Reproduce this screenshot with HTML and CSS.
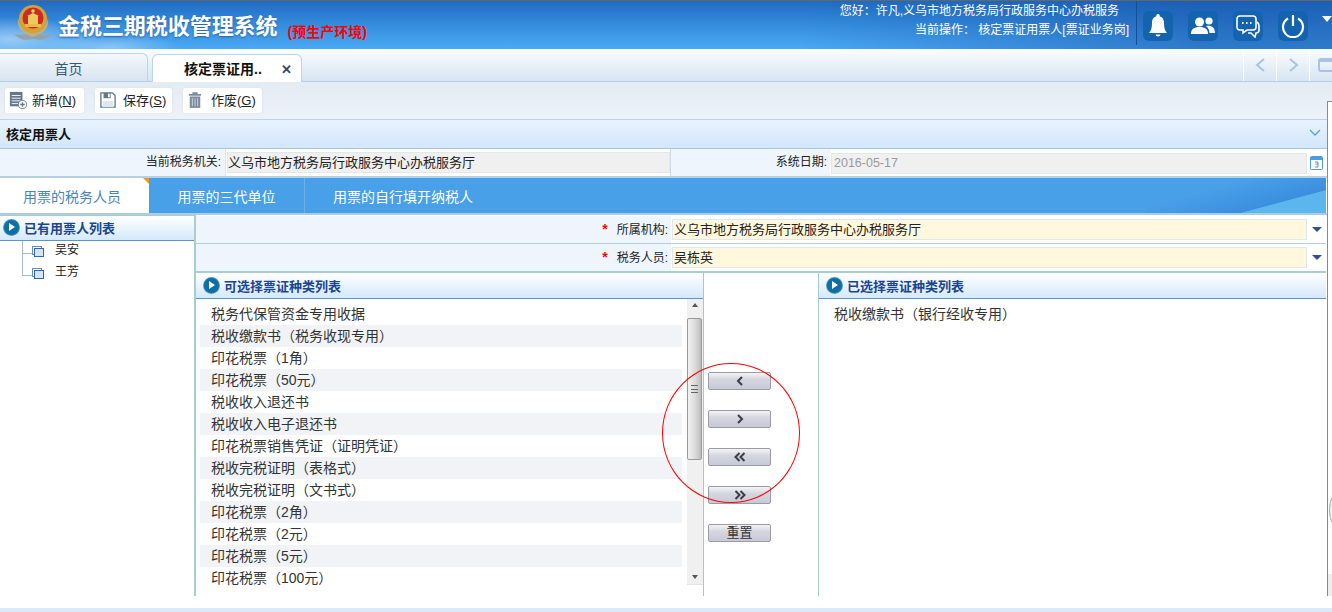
FILE: index.html
```html
<!DOCTYPE html>
<html lang="zh-CN">
<head>
    <meta charset="UTF-8">
    <title>金税三期税收管理系统</title>
    <link rel="stylesheet" href="styles.css">
</head>
<body>
    <header class="banner">
        <div class="brand">
            <svg class="emblem" width="40" height="38" viewBox="0 0 40 38">
                <path d="M1 29 Q8 37 20 34 Q32 37 39 29 Q30 31 20 28 Q10 31 1 29Z" fill="#93a3ac"/>
                <path d="M5 13 Q3 27 20 32 Q37 27 35 13 Q33 26 20 28 Q7 26 5 13Z" fill="#b9b287"/>
                <circle cx="20" cy="14" r="14" fill="#d9a032"/>
                <circle cx="20" cy="13" r="10.500" fill="#cc2a24"/>
                <path d="M12 19h16v3H12z" fill="#e6bd48"/>
                <path d="M15 11h10v8H15z" fill="#eccb5c"/>
                <path d="M14 11h12l-6-3z" fill="#f0d264"/>
                <circle cx="20" cy="6" r="1.800" fill="#f4d75e"/>
            </svg>
            <span class="sys-name">金税三期税收管理系统</span>
            <span class="env-tag">(预生产环境)</span>
        </div>
        <div class="user-info">
            <div class="hello">您好：许凡,义乌市地方税务局行政服务中心办税服务</div>
            <div>当前操作： 核定票证用票人[票证业务岗]</div>
        </div>
        <div class="head-icons">
            <span class="head-btn">
                <svg width="20" height="24" viewBox="0 0 20 24"><path d="M10 0a1.600 1.600 0 0 1 1.600 2.200C15 3 16 6 16 9c0 5 1 8 3 10H1c2-2 3-5 3-10 0-3 1-6 4.400-6.800A1.600 1.600 0 0 1 10 0zM7.500 20.500h5a2.500 2 0 0 1-5 0z" fill="#fff"/></svg>
            </span>
            <span class="head-btn">
                <svg width="24" height="18" viewBox="0 0 24 18"><circle cx="8.500" cy="5" r="4.500" fill="#fff"/><path d="M0 17c0-5 3-7 8.500-7s8.500 2 8.500 7z" fill="#fff"/><circle cx="18" cy="4" r="3.600" fill="#fff"/><path d="M15 9c5-1 9 1 9 7h-5.500c0-3-1.500-5.500-3.500-7z" fill="#fff"/></svg>
            </span>
            <span class="head-btn">
                <svg width="24" height="24" viewBox="0 0 24 24" fill="none" stroke="#fff" stroke-width="1.600"><path d="M4 2h13a3 3 0 0 1 3 3v8a3 3 0 0 1-3 3h-6l-4 3v-3H4a3 3 0 0 1-3-3V5a3 3 0 0 1 3-3z"/><path d="M21 8c1.500 1 2 2 2 4v4c0 2-1 3-3 3l-1 4-4-4h-3"/><path d="M6 9h1.500M10 9h1.500M14 9h1.500" stroke-width="2"/></svg>
            </span>
            <span class="head-btn">
                <svg width="24" height="24" viewBox="0 0 24 24" fill="none" stroke="#fff" stroke-width="2.200"><path d="M7 4.500a10 10 0 1 0 10 0"/><path d="M12 1v11"/></svg>
            </span>
        </div>
        <span class="head-more"></span>
    </header>

    <nav class="tabbar">
        <div class="page-tab">首页</div>
        <div class="page-tab active">核定票证用..<span class="tab-close">✕</span></div>
        <div class="tab-tools">
            <span class="tool-cell"><svg width="11" height="16" viewBox="0 0 11 16"><path d="M9 2 2 8l7 6" fill="none" stroke="#a9c3e0" stroke-width="2"/></svg></span>
            <span class="tool-cell"><svg width="11" height="16" viewBox="0 0 11 16"><path d="m2 2 7 6-7 6" fill="none" stroke="#a9c3e0" stroke-width="2"/></svg></span>
            <span class="tool-cell last"><span class="window-icon"></span></span>
        </div>
    </nav>

    <div class="toolbar">
        <button class="tool-btn btn-new">
            <svg width="18" height="18" viewBox="0 0 20 20"><path d="M1 1h14v16H1z" fill="#62798c"/><path d="M3 5h10M3 8h10M3 11h10M3 14h7" stroke="#fff" stroke-width="1"/><circle cx="15" cy="15" r="4.500" fill="#fff" stroke="#62798c"/><path d="M12.500 15h5M15 12.500v5" stroke="#62798c" stroke-width="1.500"/></svg>
            <span>新增(<u>N</u>)</span>
        </button>
        <button class="tool-btn btn-save">
            <svg width="16" height="16" viewBox="0 0 18 18"><path d="M1 1h13l3 3v13H1z" fill="#fff" stroke="#62798c" stroke-width="1.500"/><path d="M4 1h8v6H4z" fill="#62798c"/><path d="M9 2h2v4H9z" fill="#fff"/><path d="M3 10h12v7H3z" fill="#dfe7ee"/></svg>
            <span>保存(<u>S</u>)</span>
        </button>
        <button class="tool-btn btn-void">
            <svg width="14" height="18" viewBox="0 0 16 20"><path d="M1 3h14v2H1zM5 1h6v2H5z" fill="#7b8d9c"/><path d="M2 6h12v13H2z" fill="#7b8d9c"/><path d="M5 8v9M8 8v9M11 8v9" stroke="#d5dde4" stroke-width="1"/></svg>
            <span>作废(<u>G</u>)</span>
        </button>
    </div>

    <section class="section-head">
        <b>核定用票人</b>
        <svg width="12" height="8" viewBox="0 0 12 8"><path d="m1 1 5 5 5-5" fill="none" stroke="#5a9fdc" stroke-width="1.300"/></svg>
    </section>

    <div class="org-row">
        <label class="org-label">当前税务机关:</label>
        <div class="org-value"><span class="field grey">义乌市地方税务局行政服务中心办税服务厅</span></div>
        <label class="date-label">系统日期:</label>
        <div class="date-value">
            <span class="field grey date-text">2016-05-17</span>
            <svg class="cal" width="13" height="15" viewBox="0 0 13 15"><rect x=".5" y="1.500" width="12" height="13" rx="1" fill="#fff" stroke="#4a9be0"/><path d="M.5 2h12v3H.5z" fill="#4a9be0"/><path d="M5 7h3v2H5.500M8 9v3H5" fill="none" stroke="#5c8fc0"/></svg>
        </div>
    </div>

    <div class="blue-tabs">
        <div class="blue-tab current">用票的税务人员</div>
        <div class="blue-tab second">用票的三代单位</div>
        <div class="blue-tab last">用票的自行填开纳税人</div>
        <div class="blue-fill"></div>
    </div>

    <main class="main">
        <aside class="side">
            <div class="panel-head"><span class="dot"></span>已有用票人列表</div>
            <ul class="tree">
                <li><span class="node"></span>吴安</li>
                <li><span class="node"></span>王芳</li>
            </ul>
        </aside>
        <div class="content">
            <div class="pick-row">
                <div class="pick-label"><em>*</em>所属机构:</div>
                <div class="pick-value"><span class="field yellow">义乌市地方税务局行政服务中心办税服务厅</span><span class="caret"></span></div>
            </div>
            <div class="pick-row">
                <div class="pick-label"><em>*</em>税务人员:</div>
                <div class="pick-value"><span class="field yellow">吴栋英</span><span class="caret"></span></div>
            </div>
            <div class="transfer">
                <div class="list-left">
                    <div class="panel-head"><span class="dot"></span>可选择票证种类列表</div>
                    <div class="list-scroll">
                        <ul class="ticket-list">
                            <li>税务代保管资金专用收据</li>
                            <li>税收缴款书（税务收现专用）</li>
                            <li>印花税票（1角）</li>
                            <li>印花税票（50元）</li>
                            <li>税收收入退还书</li>
                            <li>税收收入电子退还书</li>
                            <li>印花税票销售凭证（证明凭证）</li>
                            <li>税收完税证明（表格式）</li>
                            <li>税收完税证明（文书式）</li>
                            <li>印花税票（2角）</li>
                            <li>印花税票（2元）</li>
                            <li>印花税票（5元）</li>
                            <li>印花税票（100元）</li>
                        </ul>
                        <div class="scrollbar">
                            <span class="arrow up"></span>
                            <span class="thumb"><i></i></span>
                            <span class="arrow down"></span>
                        </div>
                    </div>
                </div>
                <div class="move-col">
                    <button class="move-btn"><svg width="10" height="10" viewBox="0 0 10 10"><path d="M7 1 3 5l4 4" class="chev"/></svg></button>
                    <button class="move-btn"><svg width="10" height="10" viewBox="0 0 10 10"><path d="m3 1 4 4-4 4" class="chev"/></svg></button>
                    <button class="move-btn"><svg width="12" height="10" viewBox="0 0 12 10"><path d="M5.500 1 1.500 5l4 4M10.500 1l-4 4 4 4" class="chev"/></svg></button>
                    <button class="move-btn"><svg width="12" height="10" viewBox="0 0 12 10"><path d="m1.500 1 4 4-4 4M6.500 1l4 4-4 4" class="chev"/></svg></button>
                    <button class="move-btn">重置</button>
                    <span class="red-circle"></span>
                </div>
                <div class="list-right">
                    <div class="panel-head"><span class="dot"></span>已选择票证种类列表</div>
                    <ul class="ticket-list plain">
                        <li>税收缴款书（银行经收专用）</li>
                    </ul>
                </div>
            </div>
        </div>
    </main>
    <div class="page-foot"></div>

    <div class="page-scroll"><span class="grip"></span></div>
</body>
</html>
```

FILE: styles.css
```css
* { box-sizing: border-box; }
html, body { margin: 0; height: 612px; overflow: hidden; }
body { font-family: "Liberation Sans", "Noto Sans CJK SC", sans-serif; font-size: 12px; color: #222; background: #fff; position: relative; width: 1332px; }
ul { list-style: none; margin: 0; padding: 0; }
button { font: inherit; }

/* banner */
.banner { height: 49px; display: flex; border-top: 1px solid #666; background: linear-gradient(90deg, rgba(70,165,235,0) 0, rgba(70,165,235,0) 60%, rgba(24,84,170,.55) 90%), linear-gradient(180deg, #1f6cc2 0, #3a93e2 60%, #4aa9f4 100%); }
.brand { display: flex; align-items: center; width: 820px; padding-left: 13px; background: radial-gradient(ellipse 90px 22px at 10px 38px, rgba(255,255,255,.45), transparent), radial-gradient(ellipse 70px 14px at 110px 46px, rgba(255,255,255,.35), transparent); }
.emblem { margin-right: 5px; margin-top: -3px; flex: none; }
.sys-name { font-size: 22px; font-weight: bold; color: #fff; margin-top: -2px; text-shadow: 0 1px 2px #27609f; letter-spacing: -.05px; }
.env-tag { font-size: 14px; font-weight: bold; color: #f00; margin: 12px 0 0 10px; }
.user-info { width: 317px; height: 44px; padding-right: 7px; text-align: right; color: #fff; line-height: 18px; border-right: 1px solid #134f92; white-space: nowrap; font-size: 12px; }
.user-info div { padding-top: 1px; }
.user-info .hello { padding-right: 10px; }
.head-icons { display: flex; gap: 15px; margin-left: 6px; padding-top: 10px; }
.head-btn { width: 30px; height: 30px; border-radius: 6px; background: #1463ae; display: flex; align-items: center; justify-content: center; }
.head-more { margin: 15px 0 0 14px; border: 5px solid transparent; border-top: 6px solid #fff; height: 0; width: 0; }

/* page tabs */
.tabbar { height: 33px; display: flex; align-items: flex-end; background: linear-gradient(180deg, #fbfdff, #d6e4f2); border-bottom: 1px solid #b2cfec; position: relative; }
.page-tab { width: 148px; height: 28px; border: 1px solid #bcd3ea; border-bottom: 0; border-left: 0; border-radius: 0 6px 0 0; background: linear-gradient(180deg, #f3f8fc, #d8e4f0); color: #36587e; font-size: 14px; line-height: 31px; text-align: center; padding-right: 10px; }
.page-tab.active { width: 150px; margin-left: 4px; border-left: 1px solid #bcd3ea; border-radius: 6px 6px 0 0; background: #fff; color: #111; font-weight: bold; font-size: 14px; position: relative; top: 1px; padding-right: 8px; line-height: 29px; }
.tab-close { position: absolute; right: 9px; top: 0; font-size: 13px; color: #33496b; }
.tab-tools { margin-left: auto; display: flex; height: 32px; }
.tool-cell { width: 33px; border-left: 1px solid #fff; display: flex; align-items: center; justify-content: center; }
.tool-cell.last { width: 23px; justify-content: flex-start; padding-left: 8px; overflow: hidden; }
.window-icon { flex: none; width: 20px; height: 14px; border: 2px solid #a9c3e0; border-top-width: 4px; border-radius: 3px; }

/* toolbar */
.toolbar { height: 38px; padding: 6px 0 0 5px; display: flex; gap: 11px; background: linear-gradient(180deg, #e3ebf3, #edf2f8); border-bottom: 1px solid #bcd3ea; }
.tool-btn { height: 25px; padding: 0 0 2px 4px; display: flex; align-items: center; gap: 5px; border: 0; border-radius: 2px; background: #fff; box-shadow: 0 0 2px #d2dbe4; color: #222; font-size: 13px; white-space: nowrap; }
.btn-new { width: 79px; }
.btn-save { width: 77px; padding-left: 5px; gap: 7px; }
.btn-void { width: 79px; padding-left: 5px; gap: 9px; }

/* section */
.section-head { height: 29px; padding: 0 6px 0 6px; display: flex; align-items: center; justify-content: space-between; background: linear-gradient(180deg, #e8f3fe, #d3e6fb); border-bottom: 1px solid #a9c6df; border-right: 5px solid #fff; font-size: 13px; color: #111; }
.section-head b { margin-top: -2px; }
.section-head svg { margin-top: -3px; }
.org-row { height: 29px; display: flex; background: #eef5fc; border-bottom: 2px solid #b4d0e2; border-right: 6px solid #fff; }
.org-label { width: 225px; text-align: right; padding-right: 4px; line-height: 27px; }
.org-value { width: 445px; padding: 3px 0 2px 1px; border-left: 1px solid #dbe6ee; background: #fff; }
.org-value .field { padding-left: 0; }
.date-label { width: 160px; text-align: right; padding-right: 3px; line-height: 27px; border-left: 1px solid #cfdce8; }
.date-value { flex: 1; display: flex; padding: 3px 3px 2px 1px; background: #fff; align-items: center; }
.field { display: block; height: 21px; line-height: 19px; border: 1px solid #dfe8ef; padding-left: 1px; font-size: 13px; white-space: nowrap; flex: 1; }
.field.grey { background: #f0f0f0; }
.field.yellow { background: #fff8dc; }
.date-text { color: #9a9a9a; font-size: 12.500px; padding-left: 2px; }
.cal { margin: -2px 0 0 3px; flex: none; }

/* blue tabs */
.blue-tabs { height: 37px; display: flex; background: #48a0e8; border-bottom: 2px solid #aecbe4; color: #fff; font-size: 14px; border-right: 6px solid #fff; }
.blue-tab { line-height: 39px; text-align: center; border-right: 1px solid #6db0ea; }
.blue-tab.current { width: 149px; padding-right: 5px; background: #fff; color: #4a84b8; position: relative; border-right: 0; }
.blue-tab.current::after { content: ""; position: absolute; right: 0; top: 0; border: 3.500px solid transparent; border-top-color: #f39a1e; border-right-color: #f39a1e; }
.blue-tab.second { width: 156px; }
.blue-tab.last { width: 196px; border-right: 0; }
.blue-fill { flex: 1; background: #48a0e8 linear-gradient(165deg, #48a0e8 35%, #3c8ede 72%, #5cb6ee 73%) right / 180px 100% no-repeat; }

/* main area */
.main { height: 381px; display: flex; }
.side { width: 196px; border-right: 2px solid #a9cfcb; border-top: 1px solid #a9cfcb; }
.side .panel-head { height: 25px; padding: 0 0 2px 3px; }
.panel-head { height: 26px; padding-left: 7px; display: flex; align-items: center; gap: 4px; font-weight: bold; color: #1a4590; font-size: 13px; background: linear-gradient(180deg, #fff, #d4e9fb); border-bottom: 1px solid #5c96c4; white-space: nowrap; }
.dot { width: 17px; height: 17px; border-radius: 50%; background: radial-gradient(circle, #0f6ea6 58%, #9fd0e6 78%, #d4ecf6); position: relative; flex: none; }
.dot::after { content: ""; position: absolute; left: 6px; top: 4px; border: 4.500px solid transparent; border-left: 6px solid #fff; border-right: 0; }
.tree { padding-left: 22px; }
.tree li { height: 22px; line-height: 18px; padding-left: 32px; position: relative; font-size: 12px; border-left: 1px solid #a9b9d0; width: 70px; }
.tree li:last-child { height: 13px; }
.tree li::before { content: ""; position: absolute; left: 0; top: 12px; width: 10px; border-top: 1px solid #a9b9d0; }
.node { position: absolute; left: 11px; top: 7px; width: 10px; height: 9px; border: 1px solid #2f68b0; background: #d6e3f2; box-shadow: -2px -2px 0 -1px #fff, -2px -2px 0 0 #5f8fca; }
.content { flex: 1; min-width: 0; display: flex; flex-direction: column; border-right: 6px solid #fff; }
.pick-row { height: 28px; display: flex; background: #fff; border-bottom: 1px solid #b4d0d6; }
.pick-row:first-child { height: 29px; border-top: 1px solid #fff; }
.pick-label { width: 475px; background: #eef5fc; text-align: right; padding-right: 3px; line-height: 27px; }
.pick-label em { color: #f00; font-style: normal; margin-right: 9px; font-weight: bold; font-size: 14px; }
.pick-value { flex: 1; display: flex; align-items: center; padding: 0 0 0 1px; }
.caret { margin: 0 4px 0 5px; border: 5px solid transparent; border-top: 5px solid #2f4f94; border-bottom: 0; flex: none; }
.transfer { flex: 1; display: flex; min-height: 0; border-top: 2px solid #a9cfcb; margin-top: -1px; }
.list-left { width: 507px; display: flex; flex-direction: column; }
.list-scroll { flex: 1; display: flex; min-height: 0; overflow: hidden; }
.ticket-list { flex: 1; padding: 4px 5px 0 4px; font-size: 14px; color: #333; white-space: nowrap; }
.ticket-list li { height: 22px; line-height: 22px; padding-left: 11px; }
.ticket-list li:nth-child(even) { background: #f2f3f6; }
.ticket-list.plain { padding: 4px 0 0 4px; }
.scrollbar { width: 16px; height: 286px; background: #f0f0f0; position: relative; border-bottom: 1px solid #e4e4e4; flex: none; }
.arrow { position: absolute; left: 5px; border: 3.500px solid transparent; }
.arrow.up { top: 4px; border-bottom: 4px solid #555; border-top: 0; }
.arrow.down { bottom: 5px; border-top: 4px solid #555; border-bottom: 0; }
.thumb { position: absolute; left: 0; top: 19px; width: 15px; height: 142px; border: 1px solid #9a9a9a; border-radius: 2px; background: linear-gradient(90deg, #f2f2f2, #d8d8d8 60%, #bcbcbc); display: flex; align-items: center; justify-content: center; }
.thumb i { width: 7px; height: 8px; border-top: 1px solid #666; border-bottom: 1px solid #666; background: linear-gradient(#666, #666) center / 100% 1px no-repeat; }
.move-col { width: 116px; border-left: 1px solid #a0ccc6; border-right: 1px solid #a0ccc6; padding: 99px 0 0 4px; display: flex; flex-direction: column; gap: 20px; position: relative; }
.move-btn { width: 63px; height: 18px; padding: 0; border: 1px solid #9a9aa8; border-radius: 2px; background: linear-gradient(180deg, #f4f4f6, #d6d6e0 40%, #c8c9d8); color: #333; font-size: 13px; line-height: 14px; display: flex; align-items: center; justify-content: center; flex: none; }
.chev { fill: none; stroke: #3c3c44; stroke-width: 2; }
.red-circle { position: absolute; left: -42px; top: 90px; width: 138px; height: 140px; border: 1px solid #f00; border-radius: 50%; pointer-events: none; }
.list-right { flex: 1; min-width: 0; }
.page-foot { position: absolute; left: 0; right: 0; top: 608px; height: 4px; background: #d9eaf8; }

/* outer scrollbar, cut off at the window edge */
.page-scroll { position: absolute; right: 0; top: 101px; width: 5px; height: 495px; border-left: 1px solid #8a8a8a; border-top: 1px solid #8a8a8a; background: #fff linear-gradient(#eee, #eee) bottom / 100% 22px no-repeat; }
.grip { position: absolute; left: 1px; top: 394px; width: 10px; height: 28px; border: 1px solid #b5b5b5; border-radius: 50%; background: #f4f4f4; box-shadow: inset 2px 0 0 #f4f4f4, inset 4px 0 0 #1f7a60; }
```
